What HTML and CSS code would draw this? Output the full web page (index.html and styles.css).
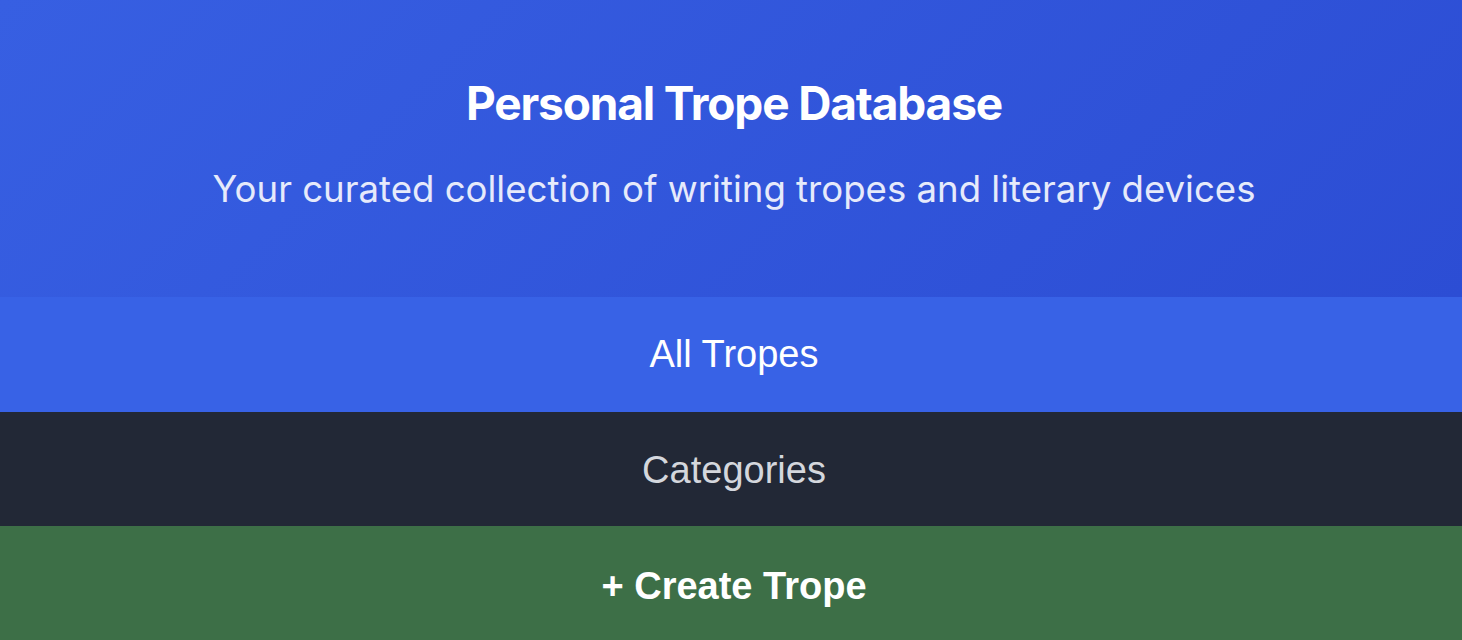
FILE: index.html
```html
<!DOCTYPE html>
<html lang="en">
<head>
<meta charset="utf-8">
<title>Personal Trope Database</title>
<link rel="stylesheet" href="styles.css">
</head>
<body>
<header class="hero">
  <h1 class="hero-title">Personal Trope Database</h1>
  <p class="hero-sub">Your curated collection of writing tropes and literary devices</p>
</header>
<nav class="nav">
  <a class="nav-btn nav-all" href="#">All Tropes</a>
  <a class="nav-btn nav-cat" href="#">Categories</a>
  <a class="nav-btn nav-create" href="#">+ Create Trope</a>
</nav>
</body>
</html>
```
FILE: styles.css
```css
* { box-sizing: border-box; }
html, body { margin: 0; padding: 0; }
body { background: #ffffff; }
.hero {
  height: 297px;
  background: linear-gradient(135deg, #375fe2 0%, #2c4dd4 100%);
  display: flex;
  flex-direction: column;
  align-items: center;
  padding: 75px 0 0 6px;
  font-family: Inter, "Noto Sans", sans-serif;
}
.hero-title {
  margin: 0;
  color: #ffffff;
  font-size: 46px;
  font-weight: 700;
  letter-spacing: -0.025em;
  line-height: 56px;
}
.hero-sub {
  margin: 36px 0 0;
  color: #e6eafb;
  font-size: 36.6px;
  font-weight: 400;
  line-height: 44px;
}
.nav { display: flex; flex-direction: column; }
.nav-btn {
  height: 114.5px;
  display: flex;
  align-items: center;
  justify-content: center;
  padding: 3px 0 0 6px;
  text-decoration: none;
  font-family: "Liberation Sans", Arial, sans-serif;
  font-size: 38px;
}
.nav-all { background: #3862e6; color: #ffffff; padding-top: 0; }
.nav-cat { background: #222836; color: #d4d7dd; }
.nav-create { background: #3d6f47; color: #ffffff; font-weight: 700; padding-top: 6px; }
```
